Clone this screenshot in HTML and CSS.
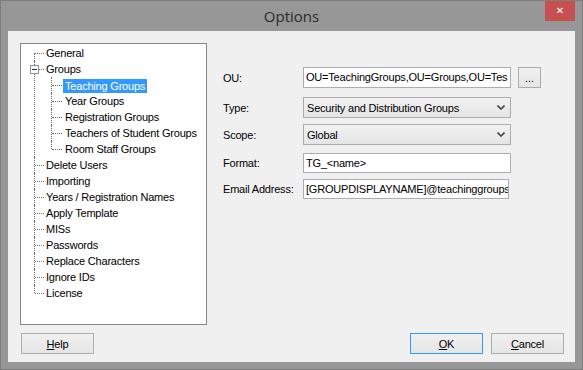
FILE: index.html
```html
<!DOCTYPE html>
<html lang="en">

<head>
    <meta charset="UTF-8">
    <meta name="viewport" content="width=device-width, initial-scale=1.0">
    <title>Options</title>
    <link rel="stylesheet" href="styles.css">
</head>

<body>
    <div class="window">
        <div class="titlebar">
            <span></span>
            <span class="title">Options</span>
            <button class="close-btn">&#x2715;</button>
        </div>

        <div class="client">
            <div class="main">
                <div class="tree">
                    <ul class="tree-root">
                        <li><span class="label">General</span></li>
                        <li class="open">
                            <span class="expander"></span><span class="label">Groups</span>
                            <ul class="tree-children">
                                <li><span class="label selected">Teaching Groups</span></li>
                                <li><span class="label">Year Groups</span></li>
                                <li><span class="label">Registration Groups</span></li>
                                <li><span class="label">Teachers of Student Groups</span></li>
                                <li><span class="label">Room Staff Groups</span></li>
                            </ul>
                        </li>
                        <li><span class="label">Delete Users</span></li>
                        <li><span class="label">Importing</span></li>
                        <li><span class="label">Years / Registration Names</span></li>
                        <li><span class="label">Apply Template</span></li>
                        <li><span class="label">MISs</span></li>
                        <li><span class="label">Passwords</span></li>
                        <li><span class="label">Replace Characters</span></li>
                        <li><span class="label">Ignore IDs</span></li>
                        <li><span class="label">License</span></li>
                    </ul>
                </div>

                <div class="form">
                    <div class="row row-ou">
                        <label>OU:</label>
                        <div class="textbox">OU=TeachingGroups,OU=Groups,OU=Tes</div>
                        <button class="browse-btn">...</button>
                    </div>
                    <div class="row row-type">
                        <label>Type:</label>
                        <div class="combo">
                            <span>Security and Distribution Groups</span>
                            <svg width="8" height="5" viewBox="0 0 8 5"><polyline points="0.5,0.5 4,4 7.5,0.5" fill="none" stroke="#444" stroke-width="1.6"/></svg>
                        </div>
                    </div>
                    <div class="row row-scope">
                        <label>Scope:</label>
                        <div class="combo">
                            <span>Global</span>
                            <svg width="8" height="5" viewBox="0 0 8 5"><polyline points="0.5,0.5 4,4 7.5,0.5" fill="none" stroke="#444" stroke-width="1.6"/></svg>
                        </div>
                    </div>
                    <div class="row row-format">
                        <label>Format:</label>
                        <div class="textbox">TG_&lt;name&gt;</div>
                    </div>
                    <div class="row row-email">
                        <label>Email Address:</label>
                        <div class="textbox narrow">[GROUPDISPLAYNAME]@teachinggroups</div>
                    </div>
                </div>
            </div>

            <div class="buttons">
                <button class="btn"><u>H</u>elp</button>
                <span class="spacer"></span>
                <button class="btn default"><u>O</u>K</button>
                <button class="btn"><u>C</u>ancel</button>
            </div>
        </div>
    </div>
</body>

</html>
```

FILE: styles.css
```css
/* General reset */

* {
    margin: 0;
    padding: 0;
    box-sizing: border-box;
}

body {
    font-family: "Liberation Sans", Arial, sans-serif;
    font-size: 11px;
    letter-spacing: -0.2px;
    color: #000;
    background-color: #979797;
}

.window {
    width: 583px;
    height: 370px;
    background-color: #979797;
    border: 1px solid #7d7d7d;
    padding: 0 7px 7px 7px;
    display: flex;
    flex-direction: column;
}

/* Title bar */

.titlebar {
    height: 30px;
    display: grid;
    grid-template-columns: 1fr auto 1fr;
    align-items: start;
}

.titlebar .title {
    font-family: "Open Sans", "Noto Sans", sans-serif;
    font-size: 15px;
    letter-spacing: 0;
    color: #2b2b2b;
    line-height: 30px;
}

.close-btn {
    justify-self: end;
    width: 30px;
    height: 20px;
    background-color: #c75050;
    color: #fff;
    border: none;
    font-family: "DejaVu Sans", sans-serif;
    font-size: 10px;
    font-weight: bold;
    line-height: 20px;
}

/* Client area */

.client {
    flex: 1;
    background-color: #f0f0f0;
    padding: 12px 11px 8px 12px;
    display: flex;
    flex-direction: column;
}

.main {
    display: flex;
    flex: 1;
}

/* Tree view */

.tree {
    width: 187px;
    height: 282px;
    background-color: #fff;
    border: 1px solid #828790;
    padding-top: 1px;
    overflow: hidden;
}

.tree ul {
    list-style: none;
}

.tree li {
    position: relative;
}

.tree-root > li {
    padding-left: 23px;
}

.tree-children > li {
    padding-left: 19px;
}

.tree li::before {
    content: "";
    position: absolute;
    top: 8px;
    border-top: 1px dotted #6d6d6d;
}

.tree li::after {
    content: "";
    position: absolute;
    top: 0;
    bottom: 0;
    border-left: 1px dotted #6d6d6d;
}

.tree-root > li::before {
    left: 14px;
    width: 9px;
}

.tree-root > li::after {
    left: 13px;
}

.tree-root > li:first-child::after {
    top: 8px;
}

.tree-root > li:last-child::after {
    bottom: auto;
    height: 8px;
}

.tree-children > li::before {
    left: 8px;
    width: 10px;
}

.tree-children > li::after {
    left: 7px;
}

.tree-children > li:last-child::after {
    bottom: auto;
    height: 8px;
}

.tree .label {
    display: inline-block;
    height: 16px;
    line-height: 16px;
    padding: 0 2px;
    white-space: nowrap;
}

.tree .label.selected {
    background-color: #3399ff;
    color: #fff;
    height: 14px;
    line-height: 14px;
    margin-top: 2px;
    vertical-align: top;
}

.expander {
    position: absolute;
    left: 9px;
    top: 4px;
    width: 9px;
    height: 9px;
    background-color: #fff;
    border: 1px solid #919191;
    z-index: 1;
}

.expander::after {
    content: "";
    position: absolute;
    left: 1px;
    top: 3px;
    width: 5px;
    height: 1px;
    background-color: #1e395b;
}

/* Form */

.form {
    margin-left: 16px;
    padding-top: 24px;
}

.row {
    display: flex;
    align-items: center;
}

.row label {
    width: 80px;
}

.row-ou {
    height: 21px;
}

.row-type {
    height: 21px;
    margin-top: 9px;
}

.row-scope {
    height: 21px;
    margin-top: 6px;
}

.row-format {
    height: 20px;
    margin-top: 8px;
}

.row-email {
    height: 20px;
    margin-top: 6px;
}

.textbox {
    width: 208px;
    height: 100%;
    background-color: #fff;
    border: 1px solid #abadb3;
    padding: 0 2px;
    line-height: 18px;
    white-space: nowrap;
    overflow: hidden;
}

.row-ou .textbox {
    line-height: 19px;
}

.textbox.narrow {
    width: 206px;
}

.browse-btn {
    width: 23px;
    height: 21px;
    margin-left: 7px;
    background: linear-gradient(#f0f0f0, #e5e5e5);
    border: 1px solid #acacac;
    font-family: "Liberation Sans", Arial, sans-serif;
    font-size: 11px;
    color: #000;
}

.combo {
    width: 208px;
    height: 100%;
    display: flex;
    align-items: center;
    justify-content: space-between;
    background: linear-gradient(#f2f2f2, #e5e5e5);
    border: 1px solid #acacac;
    padding: 0 5px 0 3px;
}

.combo svg {
    display: block;
}

/* Bottom buttons */

.buttons {
    display: flex;
    gap: 8px;
    margin-top: 8px;
    padding-left: 1px;
}

.spacer {
    flex: 1;
}

.btn {
    width: 73px;
    height: 21px;
    background: linear-gradient(#f0f0f0, #e5e5e5);
    border: 1px solid #adadad;
    font-family: "Liberation Sans", Arial, sans-serif;
    font-size: 11px;
    letter-spacing: -0.2px;
    color: #000;
}

.btn.default {
    border-color: #3399ff;
}
```
